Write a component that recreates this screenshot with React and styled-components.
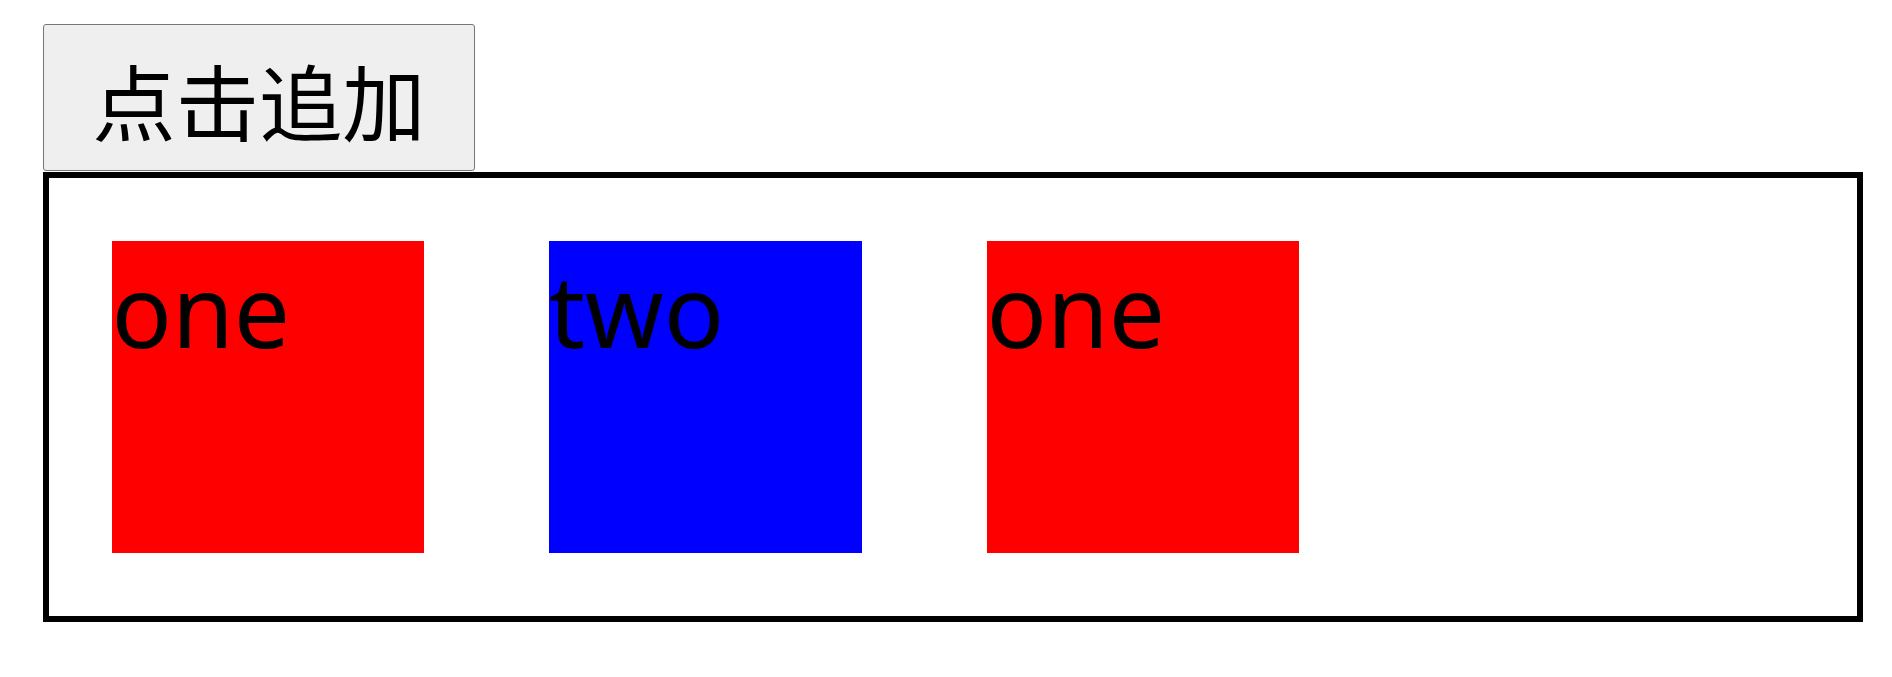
import { useState } from "react"
import styled, { createGlobalStyle } from "styled-components"

const GlobalStyle = createGlobalStyle`
    html, body {
        margin: 0;
        padding: 0;
        background: #fff;
    }
`

const initialItems = [
    { text: "one", color: "#ff0000" },
    { text: "two", color: "#0000ff" },
    { text: "one", color: "#ff0000" },
]

const App = () => {
    const [items, setItems] = useState(initialItems)

    const addItem = () => {
        const next = items.length % 2 === 0
            ? { text: "one", color: "#ff0000" }
            : { text: "two", color: "#0000ff" }
        setItems([...items, next])
    }

    return (
        <Page>
            <GlobalStyle />
            <AddButton onClick={addItem}>点击追加</AddButton>
            <Board>
                {items.map((item, i) => (
                    <Tile key={i} $color={item.color}>
                        {item.text}
                    </Tile>
                ))}
            </Board>
        </Page>
    )
}

const Page = styled.div`
    padding: 24px 0 0 43px;
`

const AddButton = styled.button`
    display: block;
    box-sizing: border-box;
    width: 432px;
    height: 147px;
    padding: 1px 0 0;
    margin: 0 0 1px;
    background-color: #efefef;
    border: 1px solid #767676;
    border-radius: 3px;
    font-family: "Noto Sans CJK SC", sans-serif;
    font-size: 83.33px;
    font-weight: 400;
    line-height: normal;
    color: #000;
    text-align: center;
    cursor: pointer;
`

const Board = styled.div`
    display: flex;
    flex-wrap: wrap;
    box-sizing: border-box;
    width: 1820px;
    border: 6px solid #000;
`

const Tile = styled.div`
    flex: none;
    width: 312.5px;
    height: 312.5px;
    margin: 62.5px;
    background-color: ${(props) => props.$color};
    font-family: "Noto Sans", sans-serif;
    font-size: 100px;
    line-height: normal;
    color: #000;
`

export default App
